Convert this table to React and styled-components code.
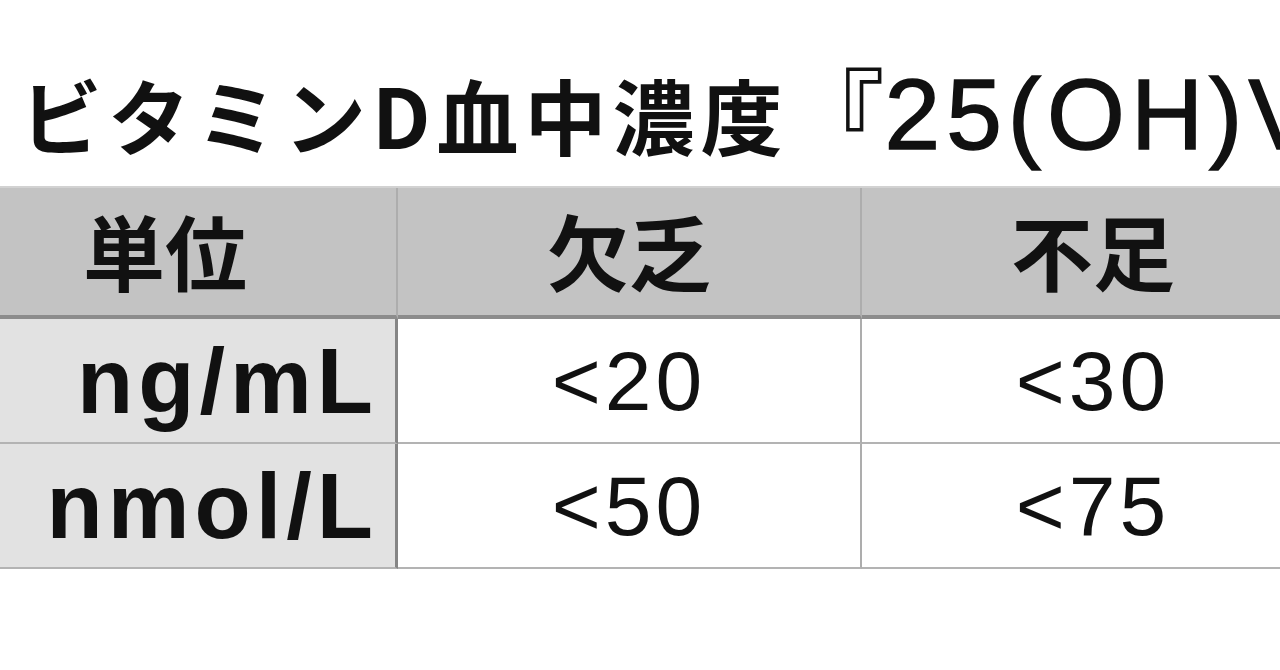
import styled, { createGlobalStyle } from 'styled-components';

const GlobalStyle = createGlobalStyle`
    * {
        box-sizing: border-box;
    }
    html, body {
        margin: 0;
        padding: 0;
        background: #ffffff;
    }
    body {
        font-family: "Liberation Sans", "Noto Sans CJK JP", sans-serif;
        color: #111111;
    }
`;

const Page = styled.div`
    width: 1280px;
    height: 670px;
    overflow: hidden;
    background: #ffffff;
`;

const Title = styled.h1`
    margin: 58px 0 0 0;
    padding-left: 20px;
    height: 100px;
    line-height: 100px;
    white-space: nowrap;
    font-family: "Noto Sans CJK JP", sans-serif;
    font-size: 82px;
    font-weight: 700;
    letter-spacing: 6px;
`;

const TitleLatin = styled.span`
    font-family: "Liberation Sans", "Noto Sans CJK JP", sans-serif;
    font-size: 100px;
    font-weight: 400;
    letter-spacing: 6px;
    -webkit-text-stroke: 1.5px #111111;
`;

const Bracket = styled.span`
    font-family: "Noto Sans CJK JP", sans-serif;
    font-size: 96px;
    font-weight: 500;
    letter-spacing: 0;
`;

const Table = styled.table`
    margin: 28px 0 0 -66px;
    border-collapse: separate;
    border-spacing: 0;
    table-layout: fixed;
    width: ${464 * 3}px;
    border-top: 2px solid #d2d2d2;
`;

const HeadCell = styled.th`
    width: 464px;
    height: 131px;
    padding: 0 0 4px 0;
    background: #c3c3c3;
    border-bottom: 4px solid #8c8c8c;
    border-right: 2px solid #adadad;
    font-family: "Noto Sans CJK JP", sans-serif;
    font-size: 82px;
    font-weight: 700;
    text-align: center;
    vertical-align: middle;
    line-height: 1;
`;

const UnitCell = styled.td`
    height: 125px;
    padding: 0 17px 0 0;
    background: #e2e2e2;
    border-bottom: 2px solid #b3b3b3;
    border-right: 3px solid #858585;
    font-size: 92px;
    font-weight: 700;
    letter-spacing: 5px;
    text-align: right;
    vertical-align: middle;
    line-height: 1;
`;

const ValueCell = styled.td`
    height: 125px;
    padding: 0;
    background: #ffffff;
    border-bottom: 2px solid #b3b3b3;
    border-right: 2px solid #adadad;
    font-size: 84px;
    font-weight: 400;
    letter-spacing: 4px;
    text-align: center;
    vertical-align: middle;
    line-height: 1;
`;

const headers = ['単位', '欠乏', '不足'];

const rows = [
    { unit: 'ng/mL', values: ['<20', '<30'] },
    { unit: 'nmol/L', values: ['<50', '<75'] },
];

const App = () => {
    return (
        <Page>
            <GlobalStyle />
            <Title>
                ビタミンD血中濃度<Bracket>『</Bracket><TitleLatin>25(OH)VitaminD</TitleLatin><Bracket>』</Bracket>
            </Title>
            <Table>
                <thead>
                    <tr>
                        {headers.map((h) => (
                            <HeadCell key={h}>{h}</HeadCell>
                        ))}
                    </tr>
                </thead>
                <tbody>
                    {rows.map((row) => (
                        <tr key={row.unit}>
                            <UnitCell>{row.unit}</UnitCell>
                            {row.values.map((v, i) => (
                                <ValueCell key={i}>{v}</ValueCell>
                            ))}
                        </tr>
                    ))}
                </tbody>
            </Table>
        </Page>
    );
};

export default App;
